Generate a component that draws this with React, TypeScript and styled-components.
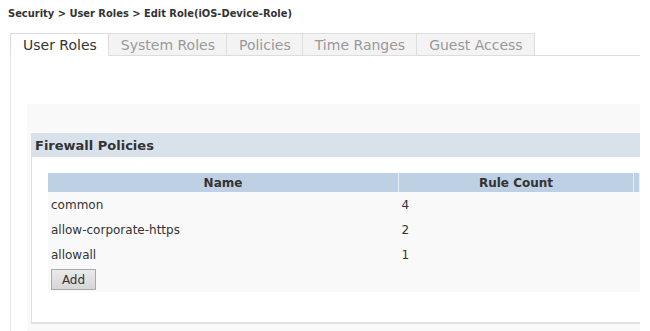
import styled, { createGlobalStyle } from "styled-components"

const GlobalStyle = createGlobalStyle`
    body {
        margin: 0;
        background: #fff;
        font-family: "DejaVu Sans", Verdana, sans-serif;
        color: #333;
    }
`

const tabs = ["User Roles", "System Roles", "Policies", "Time Ranges", "Guest Access"]

const policies = [
    { name: "common", count: 4 },
    { name: "allow-corporate-https", count: 2 },
    { name: "allowall", count: 1 },
]

export default function App() {
    return (
        <Page>
            <GlobalStyle />
            <Breadcrumb>Security &gt; User Roles &gt; Edit Role(iOS-Device-Role)</Breadcrumb>
            <TabBar>
                {tabs.map((t, i) => (
                    <Tab key={t} $active={i === 0}>{t}</Tab>
                ))}
            </TabBar>
            <TabBody>
                <Panel>
                    <Box>
                        <BoxHeader>Firewall Policies</BoxHeader>
                        <BoxBody>
                            <Table>
                                <thead>
                                    <tr>
                                        <Th $width="350px">Name</Th>
                                        <Th $width="234px">Rule Count</Th>
                                        <Th />
                                    </tr>
                                </thead>
                                <tbody>
                                    {policies.map((p) => (
                                        <tr key={p.name}>
                                            <Td>{p.name}</Td>
                                            <Td>{p.count}</Td>
                                            <Td />
                                        </tr>
                                    ))}
                                    <tr>
                                        <Td colSpan={3}>
                                            <AddButton>Add</AddButton>
                                        </Td>
                                    </tr>
                                </tbody>
                            </Table>
                        </BoxBody>
                    </Box>
                </Panel>
            </TabBody>
        </Page>
    )
}

const Page = styled.div`
    width: 640px;
    height: 331px;
    overflow: hidden;
`

const Breadcrumb = styled.h1`
    margin: 0;
    padding: 7px 0 0 8px;
    height: 26px;
    box-sizing: border-box;
    font-family: "DejaVu Sans Condensed", "DejaVu Sans", sans-serif;
    font-stretch: condensed;
    font-size: 11px;
    font-weight: bold;
    color: #333;
`

const TabBar = styled.div`
    display: flex;
    margin: 7px 0 0 10px;
    border-bottom: 1px solid #ddd;
    height: 22px;
`

const Tab = styled.div<{ $active?: boolean }>`
    display: flex;
    align-items: center;
    padding: 0 11px 0 12px;
    font-size: 14px;
    color: ${(p) => (p.$active ? "#333" : "#999")};
    background: ${(p) => (p.$active ? "#fff" : "#f3f3f3")};
    border: 1px solid #ddd;
    border-left: ${(p) => (p.$active ? "1px solid #ddd" : "none")};
    border-bottom: ${(p) => (p.$active ? "1px solid #fff" : "none")};
    margin-bottom: ${(p) => (p.$active ? "-1px" : "0")};
`

const TabBody = styled.div`
    margin-left: 10px;
    border-left: 1px solid #e6e6e6;
    padding: 48px 0 0 16px;
    height: 300px;
`

const Panel = styled.div`
    background: #f9f9f9;
    padding: 29px 0 0 4px;
    height: 100%;
`

const Box = styled.div`
    display: flex;
    flex-direction: column;
`

const BoxHeader = styled.div`
    height: 24px;
    display: flex;
    align-items: center;
    padding-left: 4px;
    background: #d9e1eb;
    font-size: 13px;
    font-weight: bold;
    color: #333;
`

const BoxBody = styled.div`
    background: #fff;
    border-left: 1px solid #e0e0e0;
    border-bottom: 2px solid #e2e2e2;
    padding: 16px 0 32px 16px;
    height: 167px;
    box-sizing: border-box;
`

const Table = styled.table`
    width: 592px;
    border-collapse: collapse;
    background: #f9f9f9;
    font-size: 12px;
`

const Th = styled.th<{ $width?: string }>`
    width: ${(p) => p.$width || "auto"};
    height: 19px;
    padding: 0;
    background: #bdd0e4;
    border-right: 1px solid #e8eef5;
    font-weight: bold;
    color: #333;
    text-align: center;
`

const Td = styled.td`
    height: 25px;
    padding: 0 0 0 3px;
    color: #333;
    vertical-align: middle;
`

const AddButton = styled.button`
    width: 45px;
    height: 21px;
    font-family: inherit;
    font-size: 12px;
    color: #333;
    background: linear-gradient(#eaeaea, #d6d6d6);
    border: 1px solid #aaa;
    border-radius: 0;
    padding: 0;
`
